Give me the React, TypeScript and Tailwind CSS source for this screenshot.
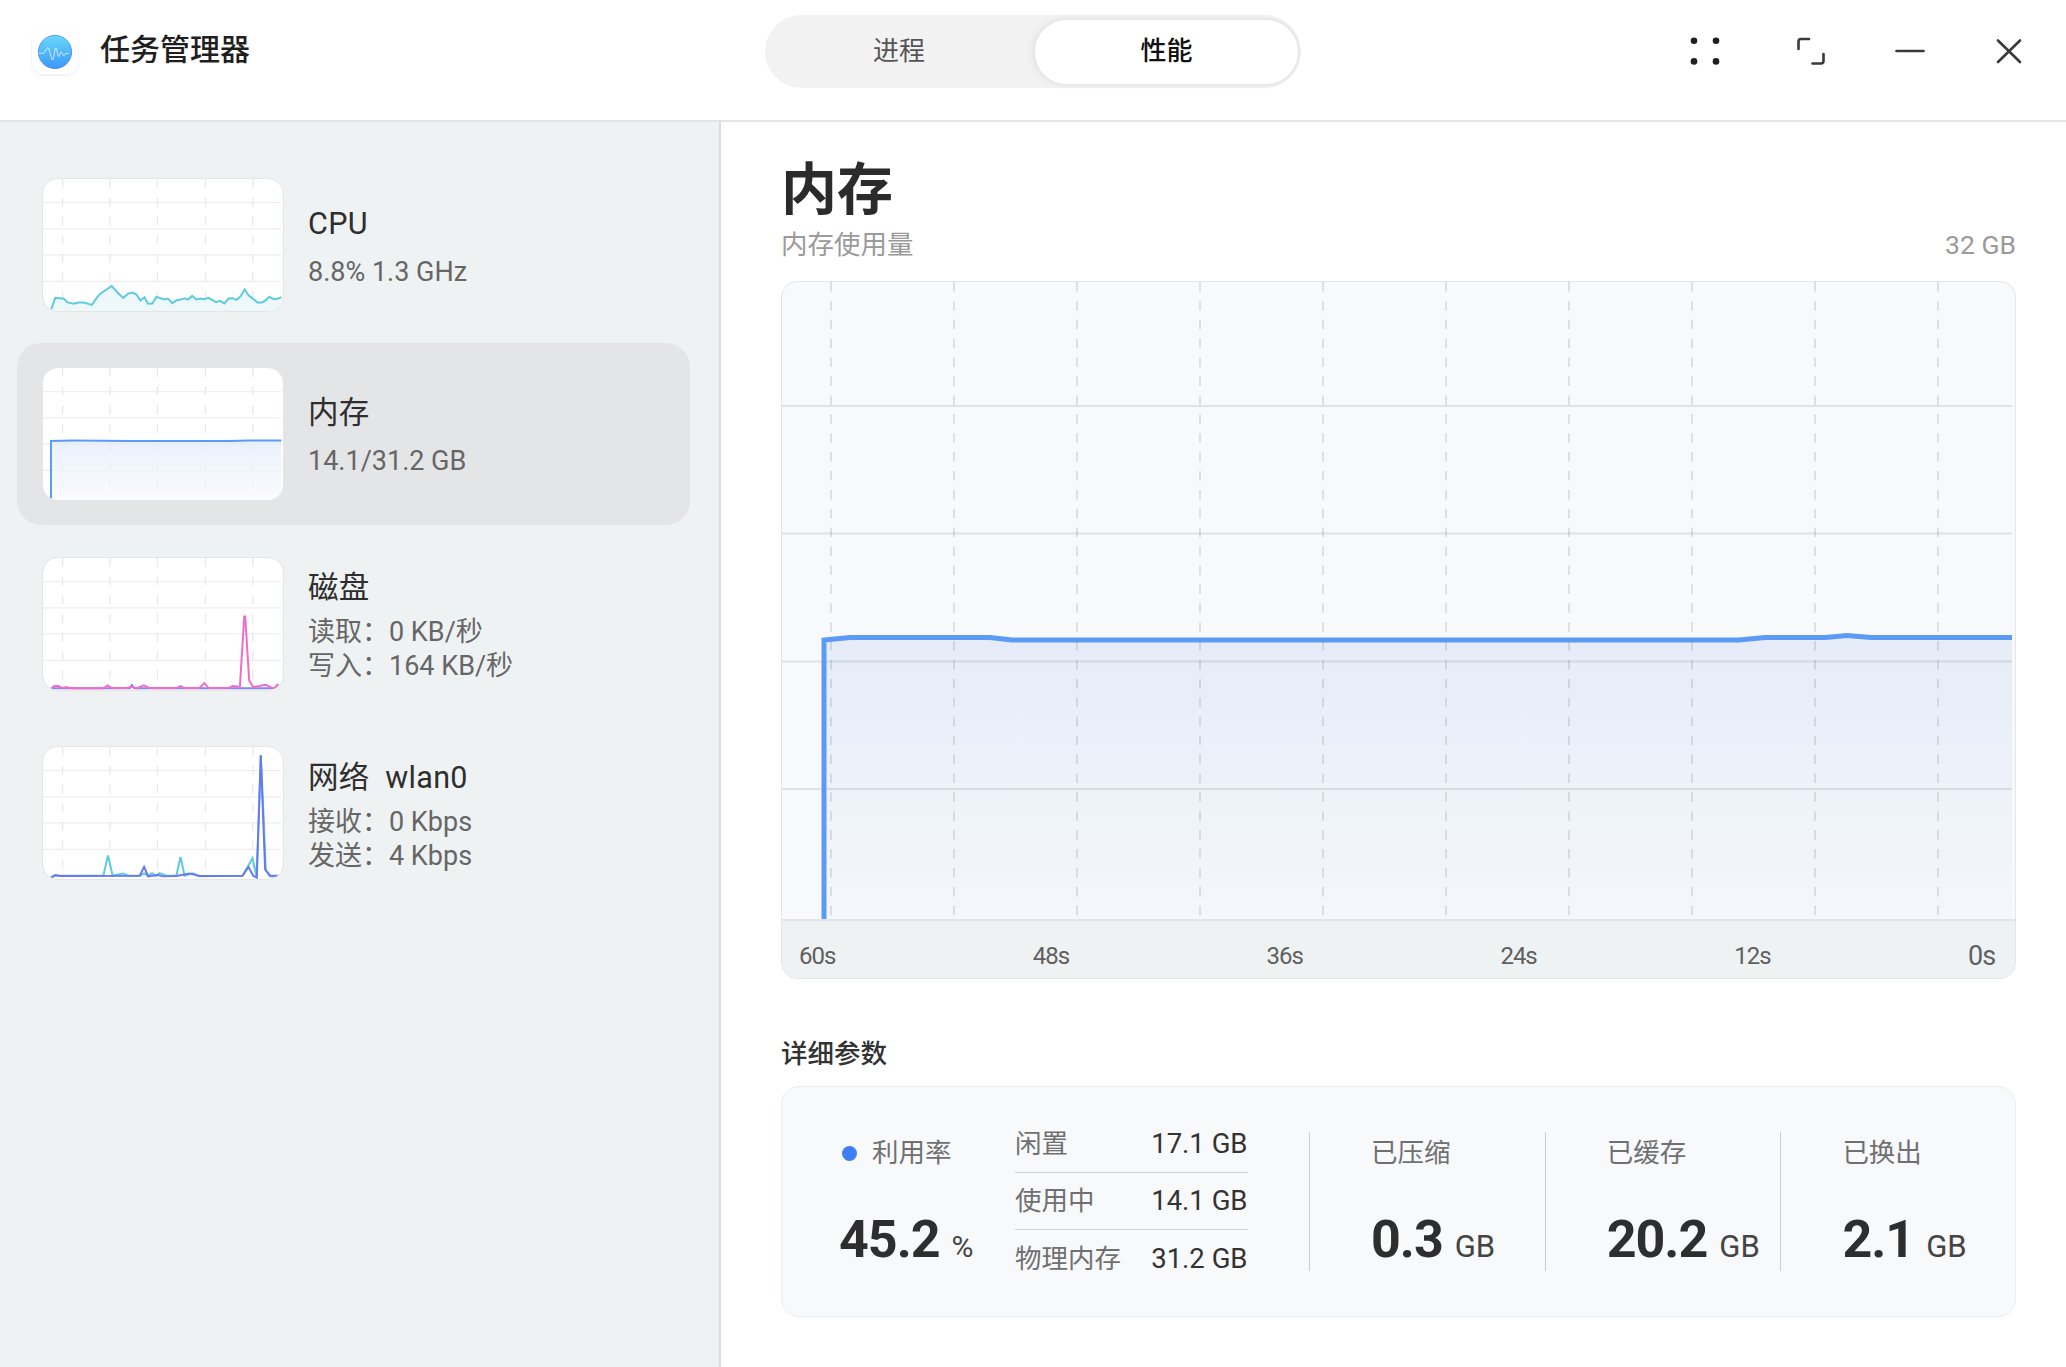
import React from 'react';

const FONT = "font-['Roboto','Noto_Sans_CJK_SC',sans-serif]";

const cpuLine = '62,425 75,388 90,390 100,390 112,402 130,406 145,402 160,402 172,405 185,410 200,388 210,376 245,352 265,374 280,388 295,375 308,372 320,378 332,396 344,386 355,406 368,405 380,385 395,390 405,393 415,390 428,404 440,396 450,394 465,389 475,393 488,382 500,393 512,390 525,392 537,388 548,394 560,401 572,397 585,405 598,390 610,389 622,394 635,382 646,362 658,380 668,388 685,402 698,402 708,397 720,385 735,392 748,390 757,386';
const memLine = '62,428 62,248 130,247 300,248 600,248 660,247 757,247';
const diskRead = '62,419 300,419 306,409 314,419 757,419';
const diskWrite = '62,420 72,412 85,412 95,418 110,415 120,419 220,419 233,410 245,418 290,418 305,414 320,419 342,410 360,418 440,418 453,412 465,418 510,418 525,403 538,418 600,417 610,412 632,414 645,200 648,200 660,395 672,415 690,412 710,408 725,416 735,420 745,408 757,418';
const netDown = '62,417 75,412 220,412 234,350 248,412 265,408 280,405 295,412 330,412 343,405 355,412 367,404 378,412 390,404 410,412 440,412 453,355 465,412 490,405 510,414 640,412 670,358 682,414 690,200 695,45 702,200 710,395 725,414 757,412';
const netUp = '62,417 75,410 90,413 330,412 343,385 355,414 385,410 400,414 440,413 480,405 510,413 640,412 658,385 672,412 683,418 695,45 708,392 722,412 757,412';

const Thumb: React.FC<{ top: number; children?: React.ReactNode }> = ({ top, children }) => (
  <div className="w-[242px] h-[134px] shrink-0 rounded-[16px] overflow-hidden bg-white border border-[#e4e5e6]">
    <svg className="block w-full h-full" viewBox={`38 ${top} 724 402`} preserveAspectRatio="none">
      {[72, 152, 231, 312].map(y => (
        <line key={y} x1="38" x2="757" y1={top + y} y2={top + y} stroke="#eeeeee" strokeWidth="4" />
      ))}
      {[97, 240, 383, 528, 671].map(x => (
        <line key={x} x1={x} x2={x} y1={top} y2={top + 402} stroke="#e9e9e9" strokeWidth="4" strokeDasharray="27 30" />
      ))}
      {children}
    </svg>
  </div>
);

const Row: React.FC<{ active?: boolean; thumb: React.ReactNode; title: string; lines: string[]; }> = ({ active, thumb, title, lines }) => {
  const twoLine = lines.length === 1;
  return (
    <div className={`h-[182px] flex items-center pl-[25px] rounded-[24px] ${active ? 'bg-[#e4e5e7]' : ''}`}>
      {thumb}
      <div className={`ml-[24px] ${twoLine ? 'pt-[6px]' : 'pt-[7px]'}`}>
        <div className={`text-[30.5px] leading-[34px] text-[#2e2e2e] whitespace-pre tracking-[0.3px] ${twoLine ? 'mb-[14px]' : 'mb-[10px]'}`}>{title}</div>
        {lines.map(l => (
          <div key={l} className="text-[27px] leading-[34px] text-[#666666] whitespace-pre">{l}</div>
        ))}
      </div>
    </div>
  );
};

const Stat: React.FC<{ label: string; value: string }> = ({ label, value }) => (
  <div className="w-[235.7px] h-[139px] border-l border-[#cccccc] pl-[61px]">
    <div className="mt-[4px] text-[26.5px] leading-[34px] text-[#707070]">{label}</div>
    <div className="mt-[44px] flex items-baseline leading-[52px] text-[#2e2e2e] whitespace-nowrap">
      <span className="text-[52px] font-bold tracking-[-1px]">{value}</span>
      <span className="ml-[12px] text-[31px] text-[#444444]">GB</span>
    </div>
  </div>
);

const Detail: React.FC<{ label: string; value: string; line?: boolean }> = ({ label, value, line }) => (
  <div className={`h-[57px] flex items-center justify-between ${line ? 'border-b border-[#d2d3d5]' : ''}`}>
    <span className="text-[26.5px] text-[#707070]">{label}</span>
    <span className="text-[27.5px] text-[#333333]">{value}</span>
  </div>
);

const App: React.FC = () => {
  const dashes = [0, 1, 2, 3, 4, 5, 6, 7, 8, 9].map(i => 831 + i * 123);
  const ticks = ['60s', '48s', '36s', '24s', '12s'];

  return (
    <div className={`w-[2066px] h-[1367px] bg-white flex flex-col overflow-hidden ${FONT}`}>
      <header className="h-[122px] shrink-0 flex items-center pb-[17px] border-b-2 border-[#e3e4e6]">
        <div className="w-[765px] shrink-0 flex items-center pl-[32px]">
          <div className="w-[46px] h-[45px] rounded-[12px] bg-white shadow-[0_1px_3px_rgba(60,90,130,0.12)]">
            <svg className="block" width="46" height="45" viewBox="32 29 46 45">
              <defs>
                <linearGradient id="logoBg" x1="0" y1="0" x2="0" y2="1">
                  <stop offset="0" stopColor="#68d9fc" />
                  <stop offset="1" stopColor="#3d97f6" />
                </linearGradient>
              </defs>
              <circle cx="55" cy="52" r="16.6" fill="url(#logoBg)" stroke="#3d86f0" strokeWidth="0.8" />
              <path d="M38.5 53.3H43.5L46 50Q47.5 46 49 49L51.5 58Q52.5 62 53.5 58L55 49Q56 46 57 51L58 55.5Q59 58 60 54Q61 50.5 62 53L63.5 55.5L66 53.5L68.5 53.5" fill="none" stroke="#ffffff" strokeWidth="0.7" />
            </svg>
          </div>
          <span className="ml-[22px] mb-[4px] text-[30px] font-medium text-[#1f1f1f]">任务管理器</span>
        </div>

        <div className="w-[536px] h-[73px] shrink-0 flex items-center rounded-full bg-[#f2f2f2]">
          <div className="w-[268px] text-center text-[26px] text-[#555555]">进程</div>
          <div className="w-[267px] h-[68px] flex items-center justify-center rounded-full bg-white border-2 border-[#e8e8e8] shadow-[-3px_0_6px_rgba(0,0,0,0.04)] text-[26px] font-medium text-[#111111]">性能</div>
        </div>

        <div className="ml-auto mb-[1px] pr-[37px] flex items-center gap-[59px]">
          <svg className="mr-[7px]" width="40" height="40" viewBox="0 0 40 40" fill="#1f1f1f">
            <circle cx="9" cy="9.7" r="3.3" /><circle cx="31" cy="9.7" r="3.3" />
            <circle cx="9" cy="30.4" r="3.3" /><circle cx="31" cy="30.4" r="3.3" />
          </svg>
          <svg width="40" height="40" viewBox="0 0 40 40" fill="none" stroke="#3a3a3a" strokeWidth="2.6" strokeLinecap="round">
            <path d="M7.5 18V10.5Q7.5 8 10 8H18" />
            <path d="M32.5 23V30Q32.5 32.5 30 32.5H21.5" />
          </svg>
          <svg width="40" height="40" viewBox="0 0 40 40" fill="none" stroke="#3a3a3a" strokeWidth="2.6" strokeLinecap="round">
            <path d="M6.5 20H33.5" />
          </svg>
          <svg width="40" height="40" viewBox="0 0 40 40" fill="none" stroke="#3a3a3a" strokeWidth="2.6" strokeLinecap="round">
            <path d="M9 9.5L31 31M31 9.5L9 31" />
          </svg>
        </div>
      </header>

      <div className="flex-1 flex min-h-0">
        <aside className="w-[721px] shrink-0 bg-[#eff2f3] border-r-2 border-[#d9dbde] pt-[32px] pl-[17px] pr-[29px] flex flex-col gap-[7.4px]">
          <Row
            title="CPU"
            lines={['8.8% 1.3 GHz']}
            thumb={
              <Thumb top={26}>
                <polygon points={`${cpuLine} 757,428 62,428`} fill="#eef8fb" />
                <polyline points={cpuLine} fill="none" stroke="#5ccbe0" strokeWidth="6" />
              </Thumb>
            }
          />
          <Row
            active
            title="内存"
            lines={['14.1/31.2 GB']}
            thumb={
              <Thumb top={26}>
                <defs>
                  <linearGradient id="memThumb" x1="0" y1="0" x2="0" y2="1">
                    <stop offset="0" stopColor="#e2ebfb" />
                    <stop offset="1" stopColor="#f8fafe" />
                  </linearGradient>
                </defs>
                <polygon points={`${memLine} 757,428`} fill="url(#memThumb)" fillOpacity="0.7" />
                <polyline points={memLine} fill="none" stroke="#5b9bf5" strokeWidth="6" />
              </Thumb>
            }
          />
          <Row
            title="磁盘"
            lines={['读取\uFF1A0 KB/秒', '写入\uFF1A164 KB/秒']}
            thumb={
              <Thumb top={22}>
                <polyline points={diskRead} fill="none" stroke="#7d88f0" strokeWidth="6" />
                <polyline points={diskWrite} fill="none" stroke="#f06cc8" strokeWidth="6" />
              </Thumb>
            }
          />
          <Row
            title="网络  wlan0"
            lines={['接收\uFF1A0 Kbps', '发送\uFF1A4 Kbps']}
            thumb={
              <Thumb top={20}>
                <polyline points={netDown} fill="none" stroke="#5ccbe0" strokeWidth="6" />
                <polyline points={netUp} fill="none" stroke="#6a78ee" strokeWidth="6" />
              </Thumb>
            }
          />
        </aside>

        <main className="flex-1 min-w-0 pl-[60px] pr-[50px] pt-[36px]">
          <h1 className="text-[56px] leading-[64px] font-bold text-[#2b2b2b]">内存</h1>
          <div className="mt-[6px] flex items-center justify-between text-[26.5px] leading-[34px] text-[#9a9a9a]">
            <span>内存使用量</span>
            <span>32 GB</span>
          </div>

          <div className="mt-[19px] h-[698px] rounded-[16px] overflow-hidden border border-[#e3e5e8] bg-[#f8f9fb] flex flex-col">
            <svg className="block w-full h-[639px] border-b-2 border-[#e3e5e8]" viewBox="782 282 1233 637" preserveAspectRatio="none">
              <defs>
                <linearGradient id="memFill" x1="0" y1="0" x2="0" y2="1">
                  <stop offset="0" stopColor="#e5ecf8" />
                  <stop offset="1" stopColor="#f4f7fb" />
                </linearGradient>
              </defs>
              <polygon points="824,919 824,640 850,637.5 990,637.5 1012,640 1739,640 1765,637.5 1825,637.5 1847,635.5 1871,637.5 2012,637.5 2012,919" fill="url(#memFill)" />
              {[406, 533.5, 661.5, 789].map(y => (
                <line key={y} x1="782" x2="2012" y1={y} y2={y} stroke="#000000" strokeOpacity="0.09" strokeWidth="2" />
              ))}
              {dashes.map(x => (
                <line key={x} x1={x} x2={x} y1="282" y2="919" stroke="#000000" strokeOpacity="0.1" strokeWidth="2" strokeDasharray="9.5 9.4" />
              ))}
              <polyline points="824,919 824,640 850,637.5 990,637.5 1012,640 1739,640 1765,637.5 1825,637.5 1847,635.5 1871,637.5 2012,637.5" fill="none" stroke="#5b9bf5" strokeWidth="5" />
            </svg>
            <div className="flex-1 bg-[#eff2f3] flex items-center pl-[17px] pt-[13px] text-[#606060]">
              {ticks.map(t => (
                <div key={t} className="w-[233.8px] text-[24px] tracking-[-1px]">{t}</div>
              ))}
              <div className="text-[27px] tracking-[-1px]">0s</div>
            </div>
          </div>

          <h2 className="mt-[58px] text-[26.5px] leading-[34px] font-medium text-[#333333]">详细参数</h2>

          <div className="mt-[15px] h-[231px] rounded-[18px] border border-[#eceef0] bg-[#f8f9fb] flex items-center pl-[57px]">
            <div className="w-[176px] h-[139px] shrink-0">
              <div className="mt-[4px] flex items-center text-[26.5px] leading-[34px] text-[#707070]">
                <span className="ml-[3px] w-[15px] h-[15px] rounded-full bg-[#3f7ff5]" />
                <span className="ml-[15px]">利用率</span>
              </div>
              <div className="mt-[44px] flex items-baseline leading-[52px] text-[#2e2e2e] whitespace-nowrap">
                <span className="text-[52px] font-bold tracking-[-1px]">45.2</span>
                <span className="ml-[12px] text-[30px] text-[#444444]">%</span>
              </div>
            </div>
            <div className="w-[232.5px] shrink-0">
              <Detail label="闲置" value="17.1 GB" line />
              <Detail label="使用中" value="14.1 GB" line />
              <Detail label="物理内存" value="31.2 GB" />
            </div>
            <div className="ml-[61.5px] flex items-center">
              <Stat label="已压缩" value="0.3" />
              <Stat label="已缓存" value="20.2" />
              <Stat label="已换出" value="2.1" />
            </div>
          </div>
        </main>
      </div>
    </div>
  );
};

export default App;
